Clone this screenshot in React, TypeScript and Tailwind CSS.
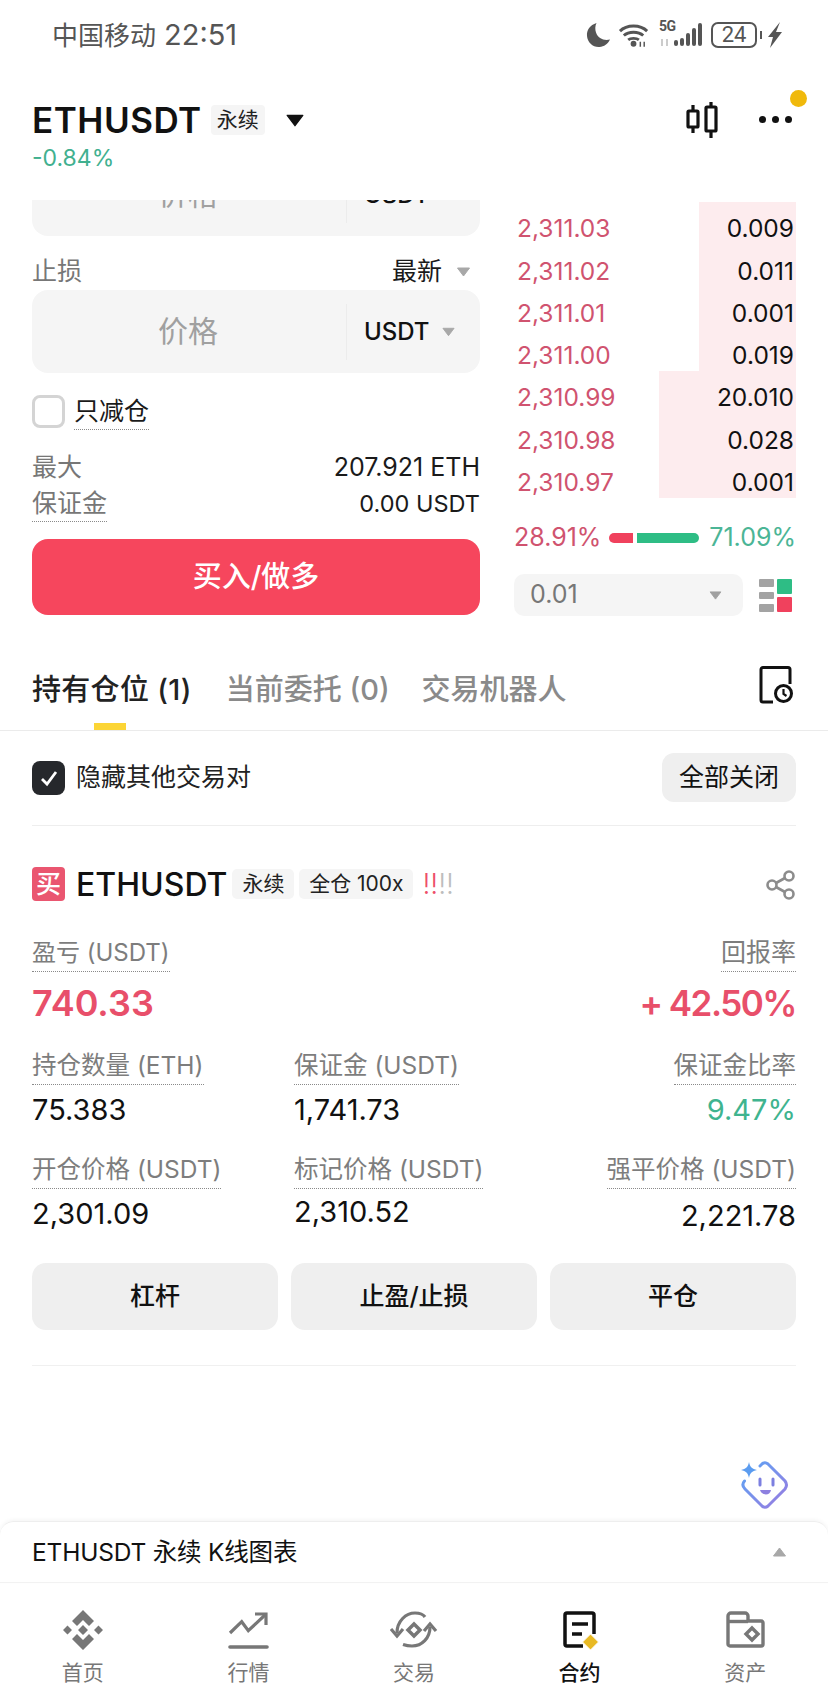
import React from "react";

const latin = "font-['Inter','Noto_Sans_CJK_SC',sans-serif]";

function Caret({ className }: { className: string }) {
  return (
    <svg viewBox="0 0 14 10" className={className} fill="currentColor">
      <path d="M1 1h12L7 9z" stroke="currentColor" strokeLinejoin="round" strokeWidth="1" />
    </svg>
  );
}

function StatusIcons() {
  return (
    <div className="flex items-center text-[#555]">
      <svg viewBox="0 0 26 26" className="h-[26px] w-[26px]" fill="currentColor">
        <path d="M10.500 1C4 3 .5 8 1 14c.5 6.500 6 11.500 12.500 11 4.500-.3 8.500-3 10.500-7.500-6 1.500-12-1-14-7C9 7.500 9 4 10.500 1z" />
      </svg>
      <svg viewBox="0 0 34 26" className="ml-[6px] h-[26px] w-[33px]" fill="none" stroke="currentColor" strokeWidth="3">
        <path d="M2 9c7-7 21-7 28 0M6 13.500c5-4.500 15-4.500 20 0M10.500 18c2.500-2 8.500-2 11 0" />
        <circle cx="16" cy="22" r="3" fill="currentColor" stroke="none" />
        <path d="M23 20v5M27 20v5" strokeWidth="1.500" />
      </svg>
      <div className="relative ml-[8px] h-[26px] w-[44px]">
        <span className="absolute left-0 top-[-3px] font-['Roboto',sans-serif] text-[14px] font-bold leading-[14px] tracking-[-0.5px] text-[#555]">5G</span>
        <svg viewBox="0 0 44 26" className="absolute left-0 top-0 h-[26px] w-[44px]" fill="currentColor">
          <rect x="15" y="18" width="4" height="6" rx="2" />
          <rect x="21" y="16" width="4" height="8" rx="2" />
          <rect x="27" y="11" width="4" height="13" rx="2" />
          <rect x="33" y="6" width="4" height="18" rx="2" />
          <rect x="39" y="1" width="4" height="23" rx="2" />
          <rect x="2" y="17" width="2" height="7" fill="#ccc" />
          <rect x="7" y="17" width="2" height="7" fill="#ccc" />
        </svg>
      </div>
      <div className="ml-[8px] flex h-[26px] w-[46px] items-center justify-center rounded-[7px] border-2 border-[#555] font-['Roboto',sans-serif] text-[22px] leading-none text-[#555]">
        24
      </div>
      <div className="ml-[3px] h-[8px] w-[2px] bg-[#555]" />
      <svg viewBox="0 0 14 26" className="ml-[6px] h-[26px] w-[14px]" fill="currentColor">
        <path d="M12 0 0 15h5L2 26 14 10H8z" />
      </svg>
    </div>
  );
}

function Dotted({ children, className = "" }: { children: React.ReactNode; className?: string }) {
  return <span className={`border-b border-dotted border-[#8a8a8a] ${className}`}>{children}</span>;
}

const asks: [string, string, number][] = [
  ["2,311.03", "0.009", 97],
  ["2,311.02", "0.011", 97],
  ["2,311.01", "0.001", 97],
  ["2,311.00", "0.019", 97],
  ["2,310.99", "20.010", 137],
  ["2,310.98", "0.028", 137],
  ["2,310.97", "0.001", 137],
];

function Field({ children }: { children: React.ReactNode }) {
  return (
    <div className="flex h-[83px] items-center rounded-[16px] bg-[#f5f5f5]">
      <div className="flex-1 pb-[1px] pl-[2px] pr-[4px] text-center text-[30px] leading-none text-[#a0a0a0]">价格</div>
      <div className="flex h-[56px] w-[134px] items-center border-l border-[#ececec] pl-[17px] text-[24px] font-medium text-[#111]">
        {children}
      </div>
    </div>
  );
}

function TradePanel() {
  return (
    <div className="flex h-[425px] overflow-hidden pl-[32px] pr-[32px]">
      <div className="w-[448px]">
        <div className="-mt-[47px]">
          <Field>USDT</Field>
        </div>
        <div className="mt-[17px] flex h-[38px] items-center justify-between">
          <span className="text-[25px] text-[#777]">止损</span>
          <span className="flex items-center text-[25px] text-[#1a1a1a]">
            最新
            <Caret className="ml-[14px] mr-[9px] h-[10px] w-[15px] text-[#a8a8a8]" />
          </span>
        </div>
        <div className="-mt-[1px]">
          <Field>
            USDT
            <Caret className="ml-[12px] h-[10px] w-[13px] text-[#a8a8a8]" />
          </Field>
        </div>
        <div className="mt-[22px] flex h-[33px] items-center">
          <div className="h-[33px] w-[33px] rounded-[8px] border-[3px] border-[#d4d4d4]" />
          <Dotted className="ml-[9px] text-[25px] leading-[35px] text-[#1a1a1a]">只减仓</Dotted>
        </div>
        <div className="mt-[22px] flex h-[36px] items-center justify-between">
          <span className="text-[25px] text-[#777]">最大</span>
          <span className="text-[25px] text-[#1a1a1a]">207.921 ETH</span>
        </div>
        <div className="flex h-[36px] items-center justify-between">
          <Dotted className="text-[25px] leading-[35px] text-[#777]">保证金</Dotted>
          <span className="text-[23.500px] text-[#1a1a1a]">0.00 USDT</span>
        </div>
        <div className="mt-[17px] flex h-[76px] items-center justify-center rounded-[16px] bg-[#f6465d] text-[29px] font-medium text-white">
          买入/做多
        </div>
      </div>
      <div className="ml-[34px] flex w-[282px] flex-col">
        <div className="pt-[2px]">
          {asks.map(([p, q, w]) => (
            <div key={p} className="relative flex h-[42.300px] items-center justify-between pl-[3px] pr-[2px] pt-[11px] text-[24.500px]">
              <div className="absolute bottom-0 right-0 top-0 bg-[#fdecee]" style={{ width: w }} />
              <span className="relative text-[#d0536f]">{p}</span>
              <span className="relative text-[#111]">{q}</span>
            </div>
          ))}
        </div>
        <div className="mt-[20px] flex h-[40px] items-center text-[25px]">
          <span className="w-[96px] text-[#d0536f]">28.91%</span>
          <div className="h-[10px] w-[24px] rounded-l-[5px] bg-[#f0415d]" />
          <div className="ml-[4px] h-[10px] w-[63px] rounded-r-[5px] bg-[#2ebd85]" />
          <span className="ml-[10px] text-[#4bb596]">71.09%</span>
        </div>
        <div className="mt-[16px] flex items-center">
          <div className="flex h-[42px] w-[229px] items-center justify-between rounded-[10px] bg-[#f5f5f5] pl-[16px] pr-[21px] text-[25px] text-[#777]">
            0.01
            <Caret className="h-[9px] w-[13px] text-[#a0a0a0]" />
          </div>
          <svg viewBox="0 0 33 33" className="ml-[16px] h-[33px] w-[33px]">
            <rect x="0" y="0" width="15" height="8" rx="1" fill="#a3a3a3" />
            <rect x="0" y="13" width="15" height="7" rx="1" fill="#a3a3a3" />
            <rect x="0" y="25" width="15" height="8" rx="1" fill="#a3a3a3" />
            <rect x="18" y="0" width="15" height="15" rx="1" fill="#2ebd85" />
            <rect x="18" y="18" width="15" height="15" rx="1" fill="#f0415d" />
          </svg>
        </div>
      </div>
    </div>
  );
}

function Stat({ label, value, align = "left", color = "text-[#111]", gap = "mt-[7px]" }: { label: string; value: string; align?: "left" | "right"; color?: string; gap?: string }) {
  return (
    <div className={`flex flex-col ${align === "right" ? "items-end" : "items-start"}`}>
      <Dotted className="text-[24.500px] leading-[37px] text-[#7d7d7d]">{label}</Dotted>
      <span className={`${gap} text-[29px] leading-[36px] ${color}`}>{value}</span>
    </div>
  );
}

function Tag({ children, className = "" }: { children: React.ReactNode; className?: string }) {
  return <span className={`flex h-[30px] items-center justify-center rounded-[5px] bg-[#f5f5f5] text-[21px] text-[#222] ${className}`}>{children}</span>;
}

function Nav() {
  const grey = "#777";
  const items: [string, React.ReactNode, boolean][] = [
    ["首页", (
      <svg viewBox="0 0 42 42" className="h-[42px] w-[42px]" fill={grey}>
        <path d="M21 1 32 12l-5 5-6-6-6 6-5-5zM21 41 32 30l-5-5-6 6-6-6-5 5zM5.500 16.500 10 21l-4.500 4.500L1 21zM36.500 16.500 41 21l-4.500 4.500L32 21zM21 16l5 5-5 5-5-5z" />
      </svg>
    ), false],
    ["行情", (
      <svg viewBox="0 0 42 42" className="h-[42px] w-[42px]" fill="none" stroke={grey} strokeWidth="3.200">
        <path d="M3 24 14.700 12.700l6.600 9L38 6" />
        <path d="M28 5h11v11" />
        <path d="M3 38h37" strokeWidth="3.600" strokeLinecap="round" />
      </svg>
    ), false],
    ["交易", (
      <svg viewBox="0 0 48 42" className="h-[42px] w-[48px]" fill="none" stroke={grey} strokeWidth="3.200">
        <path d="M7 24C7 12 16 4 25 4c4 0 8 1 10 4" />
        <path d="M40 18c0 11-8 19-18 19-3 0-6-.5-9-1.500" />
        <path d="M1 20l6 7 6-7" />
        <path d="M34 22l6-7 6 7" />
        <path d="M24 15l6 6-6 6-6-6z" strokeWidth="3.500" />
      </svg>
    ), false],
    ["合约", (
      <svg viewBox="0 0 42 42" className="h-[42px] w-[42px]">
        <path d="M24 37H8a2 2 0 0 1-2-2V6a2 2 0 0 1 2-2h25a2 2 0 0 1 2 2v19" fill="none" stroke="#111" strokeWidth="3.500" />
        <path d="M13 15h16M13 25h10" stroke="#111" strokeWidth="3.500" />
        <path d="M31.500 25l8 8-8 8-8-8z" fill="#e8b923" stroke="#fff" strokeWidth="1" />
      </svg>
    ), true],
    ["资产", (
      <svg viewBox="0 0 42 42" className="h-[42px] w-[42px]" fill="none" stroke={grey} strokeWidth="3.400">
        <path d="M4 35V7a3 3 0 0 1 3-3h14a3 3 0 0 1 3 3v5h13a2 2 0 0 1 2 2v21a2 2 0 0 1-2 2H6a2 2 0 0 1-2-2z" />
        <path d="M4 12.500h20" />
        <path d="M28 19l6 6-6 6-6-6z" />
      </svg>
    ), false],
  ];
  return (
    <div className="grid h-[107px] grid-cols-5 pt-[26px]">
      {items.map(([t, icon, on]) => (
        <div key={t} className="flex flex-col items-center">
          <div className="flex h-[42px] items-center justify-center">{icon}</div>
          <span className={`mt-[7px] text-[21px] leading-[30px] ${on ? "font-medium text-[#111]" : "text-[#777]"}`}>{t}</span>
        </div>
      ))}
    </div>
  );
}

export default function App() {
  return (
    <div className={`relative flex h-[1690px] w-[828px] flex-col overflow-hidden bg-white ${latin}`}>
      <div className="flex h-[70px] items-center justify-between pl-[52px] pr-[46px] text-[#555]">
        <div className="flex items-center">
          <span className="text-[26px]">中国移动</span>
          <span className="ml-[8px] text-[29px]">22:51</span>
        </div>
        <StatusIcons />
      </div>

      <div className="relative flex h-[130px] justify-between pl-[32px] pr-[36px]">
        <div>
          <div className="mt-[29px] flex h-[42px] items-center">
            <span className="text-[35px] font-semibold leading-none tracking-[0.5px] text-[#111]">ETHUSDT</span>
            <span className="ml-[9px] flex h-[30px] w-[54px] items-center justify-center rounded-[4px] bg-[#f5f5f5] text-[21px] text-[#222]">永续</span>
            <Caret className="ml-[20px] h-[13px] w-[20px] text-[#111]" />
          </div>
          <div className="mt-[2px] text-[23px] leading-[30px] text-[#41b08f]">-0.84%</div>
        </div>
        <div className="mt-[32px] flex h-[36px] items-center">
          <svg viewBox="0 0 32 36" className="h-[36px] w-[32px]" fill="none" stroke="#111" strokeWidth="3.200">
            <rect x="2" y="9" width="10" height="16" rx="1" />
            <path d="M7 3v6M7 25v6" />
            <rect x="20" y="5" width="10" height="24" rx="1" />
            <path d="M25 0v5M25 29v7" />
          </svg>
          <div className="ml-[41px] flex gap-[6px] pb-[1px]">
            <div className="h-[7px] w-[7px] rounded-full bg-[#111]" />
            <div className="h-[7px] w-[7px] rounded-full bg-[#111]" />
            <div className="h-[7px] w-[7px] rounded-full bg-[#111]" />
          </div>
        </div>
        <div className="absolute right-[21px] top-[20px] h-[17px] w-[17px] rounded-full bg-[#f0b90b]" />
      </div>

      <TradePanel />

      <div className="flex h-[106px] items-start border-b border-[#ebebeb] pl-[32px] pr-[33px]">
        <div className="relative mt-[45px] text-[29px] font-medium leading-[40px] tracking-[0.3px] text-[#222]">
          持有仓位 (1)
          <div className="absolute left-[62px] top-[53px] h-[7px] w-[32px] bg-[#fcd535]" />
        </div>
        <div className="ml-[34px] mt-[45px] text-[29px] font-medium leading-[40px] text-[#8a8a8a]">当前委托 (0)</div>
        <div className="ml-[32px] mt-[45px] text-[29px] font-medium leading-[40px] text-[#8a8a8a]">交易机器人</div>
        <svg viewBox="0 0 36 38" className="ml-auto mt-[41px] h-[38px] w-[36px]" fill="none" stroke="#111" strokeWidth="3">
          <path d="M14 36H4a2 2 0 0 1-2-2V3.500a2 2 0 0 1 2-2h25a2 2 0 0 1 2 2V18" />
          <circle cx="24.500" cy="27.500" r="8" />
          <path d="M24.500 23v5l3 2" strokeWidth="2.200" />
        </svg>
      </div>

      <div className="mx-[32px] flex h-[95px] items-center border-b border-[#eeeeee] pb-[1px]">
        <div className="flex h-[34px] w-[33px] items-center justify-center rounded-[8px] bg-[#26282c]">
          <svg viewBox="0 0 20 20" className="h-[20px] w-[20px]" fill="none" stroke="#fff" strokeWidth="2.800">
            <path d="M3 11l5 5 9-12" />
          </svg>
        </div>
        <span className="ml-[11px] text-[25px] text-[#222]">隐藏其他交易对</span>
        <div className="ml-auto flex h-[49px] w-[134px] items-center justify-center rounded-[12px] bg-[#efefef] text-[25px] text-[#111]">全部关闭</div>
      </div>

      <div className="mx-[32px] flex h-[120px] items-start">
        <div className="mt-[41px] flex h-[34px] w-[33px] items-center justify-center rounded-[4px] bg-[#ea5670] text-[25px] font-medium leading-none text-white">买</div>
        <span className="ml-[11px] mt-[40px] text-[32px] font-medium leading-[38px] text-[#111]">ETHUSDT</span>
        <div className="ml-[5px] mt-[43px] flex items-center gap-[5px]">
          <Tag className="w-[62px]">永续</Tag>
          <Tag className="w-[114px]">全仓 100x</Tag>
          <span className="ml-[4px] text-[28px] font-light leading-[30px]">
            <span className="text-[#ee4f6a]">!!</span>
            <span className="text-[#bdbdbd]">!!</span>
          </span>
        </div>
        <svg viewBox="0 0 30 30" className="ml-auto mt-[44px] h-[30px] w-[30px]" fill="none" stroke="#8c8c8c" strokeWidth="2.600">
          <circle cx="23" cy="6" r="4.500" />
          <circle cx="6" cy="15" r="4.500" />
          <circle cx="23" cy="24" r="4.500" />
          <path d="M10 13l9-5M10 17l9 5" />
        </svg>
      </div>

      <div className="mx-[32px]">
        <div className="-mt-[12px] flex items-start justify-between">
          <div className="flex flex-col items-start">
            <Dotted className="text-[24px] leading-[37px] text-[#7d7d7d]">盈亏 (USDT)</Dotted>
            <span className="mt-[9px] text-[36px] font-semibold leading-[44px] text-[#e84f6a]">740.33</span>
          </div>
          <div className="flex flex-col items-end">
            <Dotted className="text-[25px] leading-[37px] text-[#7d7d7d]">回报率</Dotted>
            <span className="mt-[9px] text-[35px] font-semibold leading-[44px] tracking-[-1.500px] text-[#e84f6a]">+ 42.50%</span>
          </div>
        </div>
        <div className="mt-[22px] grid grid-cols-[262px_1fr_auto]">
          <Stat label="持仓数量 (ETH)" value="75.383" />
          <Stat label="保证金 (USDT)" value="1,741.73" />
          <Stat label="保证金比率" value="9.47%" align="right" color="text-[#3fb48f]" />
        </div>
        <div className="mt-[23px] grid grid-cols-[262px_1fr_auto]">
          <Stat label="开仓价格 (USDT)" value="2,301.09" />
          <Stat label="标记价格 (USDT)" value="2,310.52" gap="mt-[5px]" />
          <Stat label="强平价格 (USDT)" value="2,221.78" align="right" gap="mt-[9px]" />
        </div>
        <div className="mt-[29px] grid grid-cols-3 gap-[13px]">
          {["杠杆", "止盈/止损", "平仓"].map((t) => (
            <div key={t} className="flex h-[67px] items-center justify-center rounded-[14px] bg-[#efefef] text-[25px] font-medium text-[#111]">{t}</div>
          ))}
        </div>
        <div className="mt-[35px] h-[1px] bg-[#f0f0f0]" />
      </div>

      <svg viewBox="0 0 50 48" className="absolute left-[739px] top-[1461px] h-[48px] w-[50px]" fill="none">
        <defs>
          <linearGradient id="ai" x1="0" y1="0" x2="1" y2="1">
            <stop offset="0" stopColor="#5ba5f5" />
            <stop offset="1" stopColor="#9a7be0" />
          </linearGradient>
        </defs>
        <path d="M21 5 23 3Q26 .5 29 3L46 20Q49 24 46 28L29 45Q26 47.500 23 45L6 28Q2 24 5.500 20" stroke="url(#ai)" strokeWidth="3" strokeLinecap="round" />
        <path d="M10 1c1 5 3 7 8 8-5 1-7 3-8 8-1-5-3-7-8-8 5-1 7-3 8-8z" fill="#5b9cf0" />
        <path d="M21 18v6M34 18v6" stroke="#7c7fe0" strokeWidth="3" strokeLinecap="round" />
        <path d="M21 29h11c-1 6-9 6-11 0z" fill="#8d80e0" />
      </svg>

      <div className="absolute bottom-0 left-0 right-0 bg-white">
        <div className="flex h-[61px] items-center justify-between rounded-t-[14px] border-t border-[#eeeeee] pl-[32px] pr-[41px] shadow-[0_-1px_4px_rgba(0,0,0,0.05)]">
          <span className="text-[24.500px] tracking-[-0.2px] text-[#111]">ETHUSDT 永续 K线图表</span>
          <Caret className="h-[10px] w-[15px] rotate-180 text-[#a8a8a8]" />
        </div>
        <div className="h-[1px] bg-[#f2f2f2]" />
        <Nav />
      </div>
    </div>
  );
}
